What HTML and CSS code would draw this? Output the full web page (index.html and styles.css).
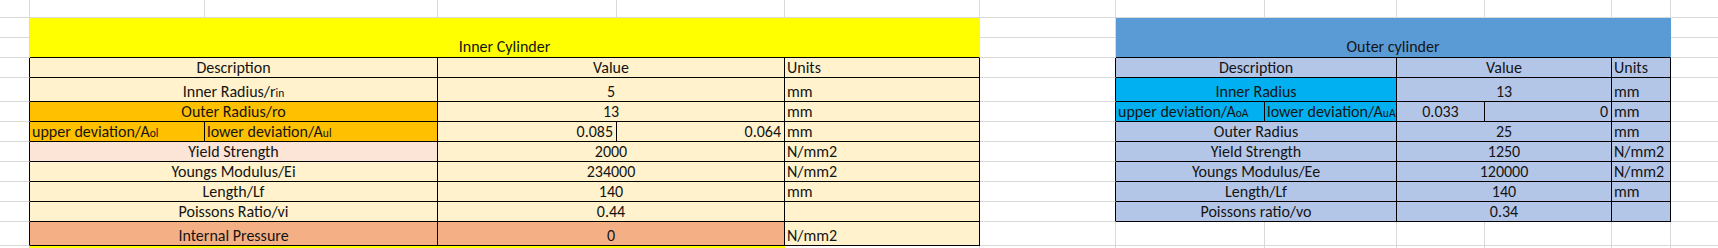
FILE: index.html
```html
<!DOCTYPE html>
<html lang="en">
<head>
<meta charset="utf-8">
<title>Cylinder parameters</title>
<link rel="stylesheet" href="styles.css">
</head>
<body>
<div class="sheet">
  <!-- row 1 -->
  <div class="c"></div><div class="c"></div><div class="c"></div><div class="c"></div><div class="c"></div><div class="c"></div><div class="c"></div><div class="c"></div><div class="c"></div><div class="c"></div><div class="c"></div><div class="c"></div><div class="c"></div>
  <!-- rows 2-3 -->
  <div class="c"></div>
  <div class="c title yellow">Inner Cylinder</div>
  <div class="c"></div>
  <div class="c title blue">Outer cylinder</div>
  <div class="c"></div>
  <div class="c"></div><div class="c"></div><div class="c"></div>
  <!-- row 4 -->
  <div class="c edge"></div>
  <div class="c t s2 peach">Description</div>
  <div class="c t s2 peach">Value</div>
  <div class="c t l peach">Units</div>
  <div class="c edge"></div>
  <div class="c t s2 lblue">Description</div>
  <div class="c t s2 lblue">Value</div>
  <div class="c t l lblue">Units</div>
  <div class="c"></div>
  <!-- row 5 -->
  <div class="c edge"></div>
  <div class="c t s2 peach">Inner Radius/r<span class="sub">in</span></div>
  <div class="c t s2 peach">5</div>
  <div class="c t l peach">mm</div>
  <div class="c edge"></div>
  <div class="c t s2 cyan">Inner Radius</div>
  <div class="c t s2 lblue">13</div>
  <div class="c t l lblue">mm</div>
  <div class="c"></div>
  <!-- row 6 -->
  <div class="c edge"></div>
  <div class="c t s2 orange">Outer Radius/ro</div>
  <div class="c t s2 peach">13</div>
  <div class="c t l peach">mm</div>
  <div class="c edge"></div>
  <div class="c t l cyan">upper deviation/A<span class="sub">oA</span></div>
  <div class="c t l cyan">lower deviation/A<span class="sub">uA</span></div>
  <div class="c t lblue">0.033</div>
  <div class="c t r lblue">0</div>
  <div class="c t l lblue">mm</div>
  <div class="c"></div>
  <!-- row 7 -->
  <div class="c edge"></div>
  <div class="c t l orange">upper deviation/A<span class="sub">ol</span></div>
  <div class="c t l orange">lower deviation/A<span class="sub">ul</span></div>
  <div class="c t r peach">0.085</div>
  <div class="c t r peach">0.064</div>
  <div class="c t l peach">mm</div>
  <div class="c edge"></div>
  <div class="c t s2 lblue">Outer Radius</div>
  <div class="c t s2 lblue">25</div>
  <div class="c t l lblue">mm</div>
  <div class="c"></div>
  <!-- row 8 -->
  <div class="c edge"></div>
  <div class="c t s2 pink">Yield Strength</div>
  <div class="c t s2 peach">2000</div>
  <div class="c t l peach">N/mm2</div>
  <div class="c edge"></div>
  <div class="c t s2 lblue">Yield Strength</div>
  <div class="c t s2 lblue">1250</div>
  <div class="c t l lblue">N/mm2</div>
  <div class="c"></div>
  <!-- row 9 -->
  <div class="c edge"></div>
  <div class="c t s2 peach">Youngs Modulus/Ei</div>
  <div class="c t s2 peach">234000</div>
  <div class="c t l peach">N/mm2</div>
  <div class="c edge"></div>
  <div class="c t s2 lblue">Youngs Modulus/Ee</div>
  <div class="c t s2 lblue">120000</div>
  <div class="c t l lblue">N/mm2</div>
  <div class="c"></div>
  <!-- row 10 -->
  <div class="c edge"></div>
  <div class="c t s2 peach">Length/Lf</div>
  <div class="c t s2 peach">140</div>
  <div class="c t l peach">mm</div>
  <div class="c edge"></div>
  <div class="c t s2 lblue">Length/Lf</div>
  <div class="c t s2 lblue">140</div>
  <div class="c t l lblue">mm</div>
  <div class="c"></div>
  <!-- row 11 -->
  <div class="c edge"></div>
  <div class="c t s2 peach">Poissons Ratio/vi</div>
  <div class="c t s2 peach">0.44</div>
  <div class="c t l peach"></div>
  <div class="c edge"></div>
  <div class="c t s2 lblue">Poissons ratio/vo</div>
  <div class="c t s2 lblue">0.34</div>
  <div class="c t l lblue"></div>
  <div class="c"></div>
  <!-- row 12 -->
  <div class="c edge"></div>
  <div class="c t s2 salmon">Internal Pressure</div>
  <div class="c t s2 salmon">0</div>
  <div class="c t l peach">N/mm2</div>
  <div class="c"></div><div class="c"></div><div class="c"></div><div class="c"></div><div class="c"></div><div class="c"></div><div class="c"></div>
  <!-- row 13 -->
  <div class="c last"></div>
  <div class="c last s4 yellow"></div>
  <div class="c last"></div><div class="c last"></div><div class="c last"></div><div class="c last"></div><div class="c last"></div><div class="c last"></div><div class="c last"></div><div class="c last"></div>
</div>
</body>
</html>
```

FILE: styles.css
```css
* {
  box-sizing: border-box;
}

html,
body {
  margin: 0;
  background: #ffffff;
}

body {
  width: 1718px;
  height: 248px;
  overflow: hidden;
  font-family: Carlito, Lato, "Open Sans", sans-serif;
  font-size: 16px;
  color: #141414;
}

.sheet {
  display: grid;
  height: 248px;
  overflow: hidden;
  grid-template-columns: 30px 175px 233px 179px 168px 195px 136px 149px 132px 88px 127px 59px 48px;
  grid-template-rows: 18px 20px 20px 20px 24px 20px 20px 20px 20px 20px 20px 24px 2px;
}

.c {
  display: flex;
  align-items: flex-end;
  justify-content: center;
  padding: 0 2px 0 2px;
  border-right: 1px solid #d9d9d9;
  border-bottom: 1px solid #d9d9d9;
  white-space: nowrap;
  overflow: hidden;
  line-height: 18px;
  min-width: 0;
}

.c.l {
  justify-content: flex-start;
}

.c.r {
  justify-content: flex-end;
  padding-right: 3px;
}

.c.last {
  border-bottom: 0;
}

.s2 {
  grid-column: span 2;
}

.s4 {
  grid-column: span 4;
}

.title {
  grid-column: span 5;
  grid-row: span 2;
  padding-bottom: 1px;
}

.yellow {
  background: #ffff00;
  border-right-color: #ffff00;
  border-bottom-color: #ffff00;
}

.blue {
  background: #5b9bd5;
  border-right-color: #5b9bd5;
}

.title.yellow,
.title.blue {
  border-bottom-color: #000000;
}

.edge {
  border-right-color: #000000;
}

.t {
  border-right-color: #000000;
  border-bottom-color: #000000;
}

.peach {
  background: #fff2cc;
}

.orange {
  background: #ffc000;
}

.pink {
  background: #fce4d6;
}

.salmon {
  background: #f4b084;
}

.lblue {
  background: #b4c6e7;
}

.cyan {
  background: #00b0f0;
}

.sub {
  font-size: 0.72em;
  position: relative;
  top: 1px;
}
```
